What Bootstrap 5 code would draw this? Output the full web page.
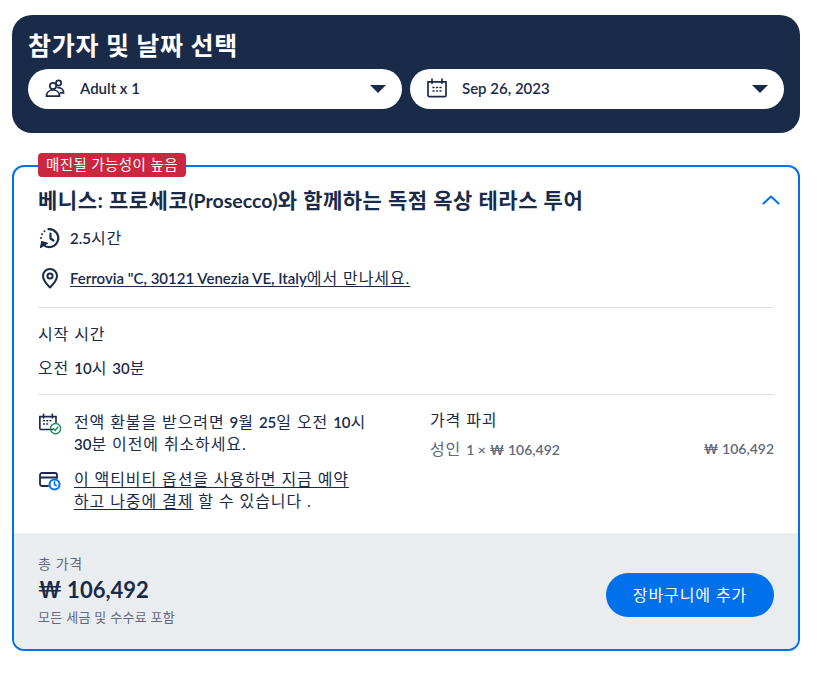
<!DOCTYPE html>
<html lang="ko">
<head>
  <meta charset="UTF-8">
  <meta name="viewport" content="width=device-width, initial-scale=1.0">
  <title>참가자 및 날짜 선택</title>
  <link href="https://cdn.jsdelivr.net/npm/bootstrap@5.3.1/dist/css/bootstrap.min.css" rel="stylesheet">
  <style>
    body {
      font-family: Lato, "Noto Sans CJK KR", sans-serif;
      color: #1a2b49;
      background: #fff;
      font-size: 16px;
      line-height: 20px;
      letter-spacing: .9px;
    }
    .lat { font-size: 15px; letter-spacing: 0; font-weight: 600; }
    .page-wrap { padding: 15px 17px 0 12px; }
    .picker-panel {
      background: #1a2b49;
      border-radius: 20px;
      padding: 15px 16px 24px;
      height: 118px;
    }
    .picker-title {
      color: #fff;
      font-size: 25px;
      line-height: 30px;
      font-weight: 700;
      letter-spacing: .7px;
      margin: 0 0 9px;
    }
    .picker-pill {
      flex: 1 1 0;
      height: 40px;
      background: #fff;
      border-radius: 20px;
      padding: 0 16px 2px 17px;
    }
    .pill-label { margin-left: 15px; }
    .pill-caret {
      margin-left: auto;
      margin-top: 2px;
      width: 0;
      height: 0;
      border-left: 8px solid transparent;
      border-right: 8px solid transparent;
      border-top: 8px solid #1a2b49;
    }
    .option-outer { position: relative; margin-top: 32px; }
    .option-box {
      height: 486px;
      border: 2px solid #0071eb;
      border-radius: 12px;
      overflow: hidden;
    }
    .sellout-tag {
      position: absolute;
      top: -12px;
      left: 26px;
      z-index: 2;
      height: 24px;
      padding: 0 8px;
      background: #c9283e;
      color: #fff;
      font-size: 14.5px;
      line-height: 24px;
      letter-spacing: .4px;
      border-radius: 4px;
    }
    .option-main { padding: 19px 24px 0; height: 366px; }
    .option-title {
      font-size: 21px;
      line-height: 28px;
      font-weight: 700;
      letter-spacing: .5px;
      margin: 0;
    }
    .option-title .lat { font-size: 19.5px; font-weight: 700; }
    .collapse-arrow { margin: 0 -6px 2px 0; }
    .info-row { height: 20px; }
    .info-icon { width: 24px; flex: none; margin-right: 8px; }
    .line-link { color: #1a2b49; text-decoration: underline; text-underline-offset: 2px; }
    .hr-line { border-top: 1px solid #dcdfe4; margin: 0; }
    .muted-line { color: #63687a; }
    .muted-line .lat { font-size: 14px; }
    .policy-side { width: 392px; flex: none; padding-top: 1px; }
    .policy-icon { width: 24px; flex: none; margin-right: 12px; }
    .policy-text { line-height: 22px; }
    .total-bar {
      background: #e9edf0;
      height: 116px;
      padding: 0 24px;
    }
    .total-label { color: #63687a; font-size: 14px; line-height: 18px; letter-spacing: .6px; margin-top: -2px; }
    .total-value { font-size: 22px; line-height: 30px; font-weight: 700; letter-spacing: 0; margin-top: 2px; }
    .total-note { color: #63687a; font-size: 13px; line-height: 18px; margin-top: 3px; letter-spacing: .3px; }
    .cart-btn {
      background: #0071eb;
      color: #fff;
      border: 0;
      border-radius: 22px;
      height: 44px;
      width: 168px;
      font-size: 16px;
      letter-spacing: .9px;
      padding: 0;
      margin-top: 8px;
    }
  </style>
</head>
<body>
  <div class="page-wrap">
    <div class="picker-panel">
      <h1 class="picker-title">참가자 및 날짜 선택</h1>
      <div class="d-flex gap-2">
        <div class="picker-pill d-flex align-items-center">
          <svg width="20" height="20" viewBox="0 0 20 20" fill="none" stroke="#1a2b49" stroke-width="1.7" stroke-linecap="round"><circle cx="8" cy="8" r="3.2"/><circle cx="13.6" cy="5" r="2.6"/><path d="M1.5 18.2h13c0-3.6-2.6-6.2-6.5-6.2s-6.5 2.6-6.5 6.2zM13 9.6c3.4 0 5.6 2.2 5.6 5.2h-3"/></svg>
          <span class="pill-label lat">Adult x 1</span>
          <span class="pill-caret"></span>
        </div>
        <div class="picker-pill d-flex align-items-center">
          <svg width="20" height="20" viewBox="0 0 20 20" fill="none" stroke="#1a2b49" stroke-width="1.7" stroke-linecap="round"><path d="M1 3.8h18v13.4a1.4 1.4 0 0 1-1.4 1.4H2.4A1.4 1.4 0 0 1 1 17.2zM5 1.2v4M15 1.2v4"/><path d="M6 9.5h1M9.5 9.5h1M13 9.5h1M6 13h1M9.5 13h1M13 13h1" stroke-width="1.5"/></svg>
          <span class="pill-label lat">Sep 26, 2023</span>
          <span class="pill-caret"></span>
        </div>
      </div>
    </div>

    <div class="option-outer">
      <div class="sellout-tag">매진될 가능성이 높음</div>
      <div class="option-box d-flex flex-column">
        <div class="option-main">
          <div class="d-flex justify-content-between align-items-center">
            <h2 class="option-title">베니스: 프로세코<span class="lat">(Prosecco)</span>와 함께하는 독점 옥상 테라스 투어</h2>
            <svg class="collapse-arrow" width="18" height="10" viewBox="0 0 18 10" fill="none" stroke="#0071eb" stroke-width="2" stroke-linecap="round" stroke-linejoin="round"><path d="M1.5 8.5 9 1.5l7.5 7"/></svg>
          </div>
          <div class="d-flex align-items-center info-row" style="margin-top:13px">
            <span class="info-icon d-flex">
              <svg width="24" height="24" viewBox="0 0 24 24" fill="none" stroke="#1a2b49" stroke-width="2.2" stroke-linecap="round" stroke-linejoin="round"><path d="M10.5 3.1A9 9 0 1 1 5.500 19"/><path d="M12.5 7.5v5l3 2"/><path d="M2.5 21.5l1.2-5.800 5.800 1.600z" fill="#1a2b49" stroke-width="1.2"/><path d="M6.5 5.200h.01M4 8.200h.01M3 12h.01" stroke-width="2"/></svg>
            </span>
            <span><span class="lat">2.5</span>시간</span>
          </div>
          <div class="d-flex align-items-center info-row" style="margin-top:20px">
            <span class="info-icon d-flex justify-content-center">
              <svg width="18" height="22" viewBox="0 0 18 22" fill="none" stroke="#1a2b49" stroke-width="2"><path d="M9 20.5C5 16.500 2 13.200 2 9a7 7 0 0 1 14 0c0 4.200-3 7.500-7 11.500z" stroke-linejoin="round"/><circle cx="9" cy="9" r="2.6"/></svg>
            </span>
            <a href="#" class="line-link"><span class="lat">Ferrovia "C, 30121 Venezia VE, Italy</span>에서 만나세요.</a>
          </div>
          <div class="hr-line" style="margin-top:19px"></div>
          <div style="margin-top:16px">시작 시간</div>
          <div style="margin-top:14px">오전 <span class="lat">10</span>시 <span class="lat">30</span>분</div>
          <div class="hr-line" style="margin-top:16px"></div>
          <div class="d-flex" style="margin-top:15px">
            <div class="policy-side">
              <div class="d-flex">
                <span class="policy-icon d-flex">
                  <svg width="26" height="26" viewBox="0 0 26 26" fill="none" stroke="#1a2b49" stroke-width="1.8" stroke-linecap="round"><path d="M16 19H3.500A1.500 1.500 0 0 1 2 17.500V5h17.500v6M6 2.500v4M15.500 2.500v4"/><path d="M6 9.500h1M9.500 9.500h1M13 9.500h1M6 13h1M9.500 13h1" stroke-width="1.5"/><circle cx="19" cy="18" r="5.5" stroke="#1e8a5f" stroke-width="1.5"/><path d="M16.500 18l2 2 3-3.500" stroke="#1e8a5f" stroke-width="1.5"/></svg>
                </span>
                <div class="policy-text">전액 환불을 받으려면 <span class="lat">9</span>월 <span class="lat">25</span>일 오전 <span class="lat">10</span>시<br><span class="lat">30</span>분 이전에 취소하세요.</div>
              </div>
              <div class="d-flex" style="margin-top:13px">
                <span class="policy-icon d-flex">
                  <svg width="24" height="24" viewBox="0 0 24 24" fill="none" stroke="#1a2b49" stroke-width="1.8" stroke-linecap="round"><path d="M10 18H4a2 2 0 0 1-2-2V7a2 2 0 0 1 2-2h13a2 2 0 0 1 2 2v3M2 9.500h17"/><circle cx="16.500" cy="16.500" r="5" stroke="#0071eb" stroke-width="2"/><path d="M16.500 13.800v2.900l1.800 1" stroke="#0071eb" stroke-width="1.5"/></svg>
                </span>
                <div class="policy-text"><a href="#" class="line-link">이 액티비티 옵션을 사용하면 지금 예약<br>하고 나중에 결제</a> 할 수 있습니다 .</div>
              </div>
            </div>
            <div class="flex-grow-1">
              <div>가격 파괴</div>
              <div class="d-flex justify-content-between muted-line" style="margin-top:9px">
                <span>성인 <span class="lat">1 × ₩ 106,492</span></span>
                <span class="lat">₩ 106,492</span>
              </div>
            </div>
          </div>
        </div>
        <div class="total-bar d-flex align-items-center justify-content-between">
          <div>
            <div class="total-label">총 가격</div>
            <div class="total-value">₩ 106,492</div>
            <div class="total-note">모든 세금 및 수수료 포함</div>
          </div>
          <button type="button" class="btn cart-btn">장바구니에 추가</button>
        </div>
      </div>
    </div>
  </div>
  <script src="https://cdn.jsdelivr.net/npm/bootstrap@5.3.1/dist/js/bootstrap.bundle.min.js"></script>
</body>
</html>
